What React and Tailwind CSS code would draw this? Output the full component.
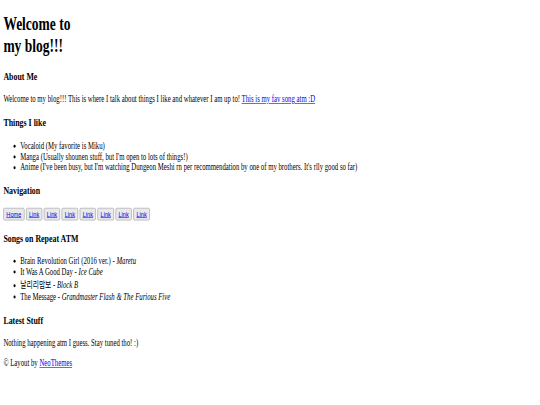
const things = [
  'Vocaloid (My favorite is Miku)',
  "Manga (Usually shounen stuff, but I'm open to lots of things!)",
  "Anime (I've been busy, but I'm watching Dungeon Meshi rn per recommendation by one of my brothers. It's rlly good so far)",
];

const songs = [
  { title: 'Brain Revolution Girl (2016 ver.)', artist: 'Maretu' },
  { title: 'It Was A Good Day', artist: 'Ice Cube' },
  { title: '날리리맘보', artist: 'Block B' },
  { title: 'The Message', artist: 'Grandmaster Flash & The Furious Five' },
];

const navLinks = ['Home', 'Link', 'Link', 'Link', 'Link', 'Link', 'Link', 'Link'];

function Heading({ children }) {
  return <h3 className="text-[18.72px] font-bold my-[18.72px]">{children}</h3>;
}

export default function App() {
  return (
    <div className="w-[540px] h-[405px] overflow-hidden bg-white">
      <div className="w-[1280px] origin-top-left scale-x-[0.421875] scale-y-[0.596] px-2 pt-0 text-black text-[16px] leading-[normal] font-['Liberation_Serif','Noto_Sans_CJK_KR',serif]">
        <h1 className="w-[200px] text-[32px] font-bold mt-[13px] mb-[21.44px]">Welcome to my blog!!!</h1>

        <Heading>About Me</Heading>
        <p className="my-4">
          Welcome to my blog!!! This is where I talk about things I like and whatever I am up to!{' '}
          <a href="#" className="text-[#0000ee] underline">This is my fav song atm :D</a>
        </p>

        <Heading>Things I like</Heading>
        <ul className="list-disc pl-10 my-4">
          {things.map((t) => (
            <li key={t}>{t}</li>
          ))}
        </ul>

        <Heading>Navigation</Heading>
        <div className="flex gap-1">
          {navLinks.map((l, i) => (
            <button
              key={i}
              className="bg-[#e9e9e9] border border-[#8f8f8f] rounded-[3px] px-1.5 py-0.5 text-[13.33px] leading-[normal] font-['Liberation_Sans',Arial,sans-serif]"
            >
              <a href="#" className="text-[#0000ee] underline">{l}</a>
            </button>
          ))}
        </div>

        <Heading>Songs on Repeat ATM</Heading>
        <ul className="list-disc pl-10 my-4">
          {songs.map((s) => (
            <li key={s.title}>
              {s.title} - <i>{s.artist}</i>
            </li>
          ))}
        </ul>

        <Heading>Latest Stuff</Heading>
        <p className="my-4">Nothing happening atm I guess. Stay tuned tho! :)</p>
        <p className="my-4">
          © Layout by <a href="#" className="text-[#0000ee] underline">NeoThemes</a>
        </p>
      </div>
    </div>
  );
}
